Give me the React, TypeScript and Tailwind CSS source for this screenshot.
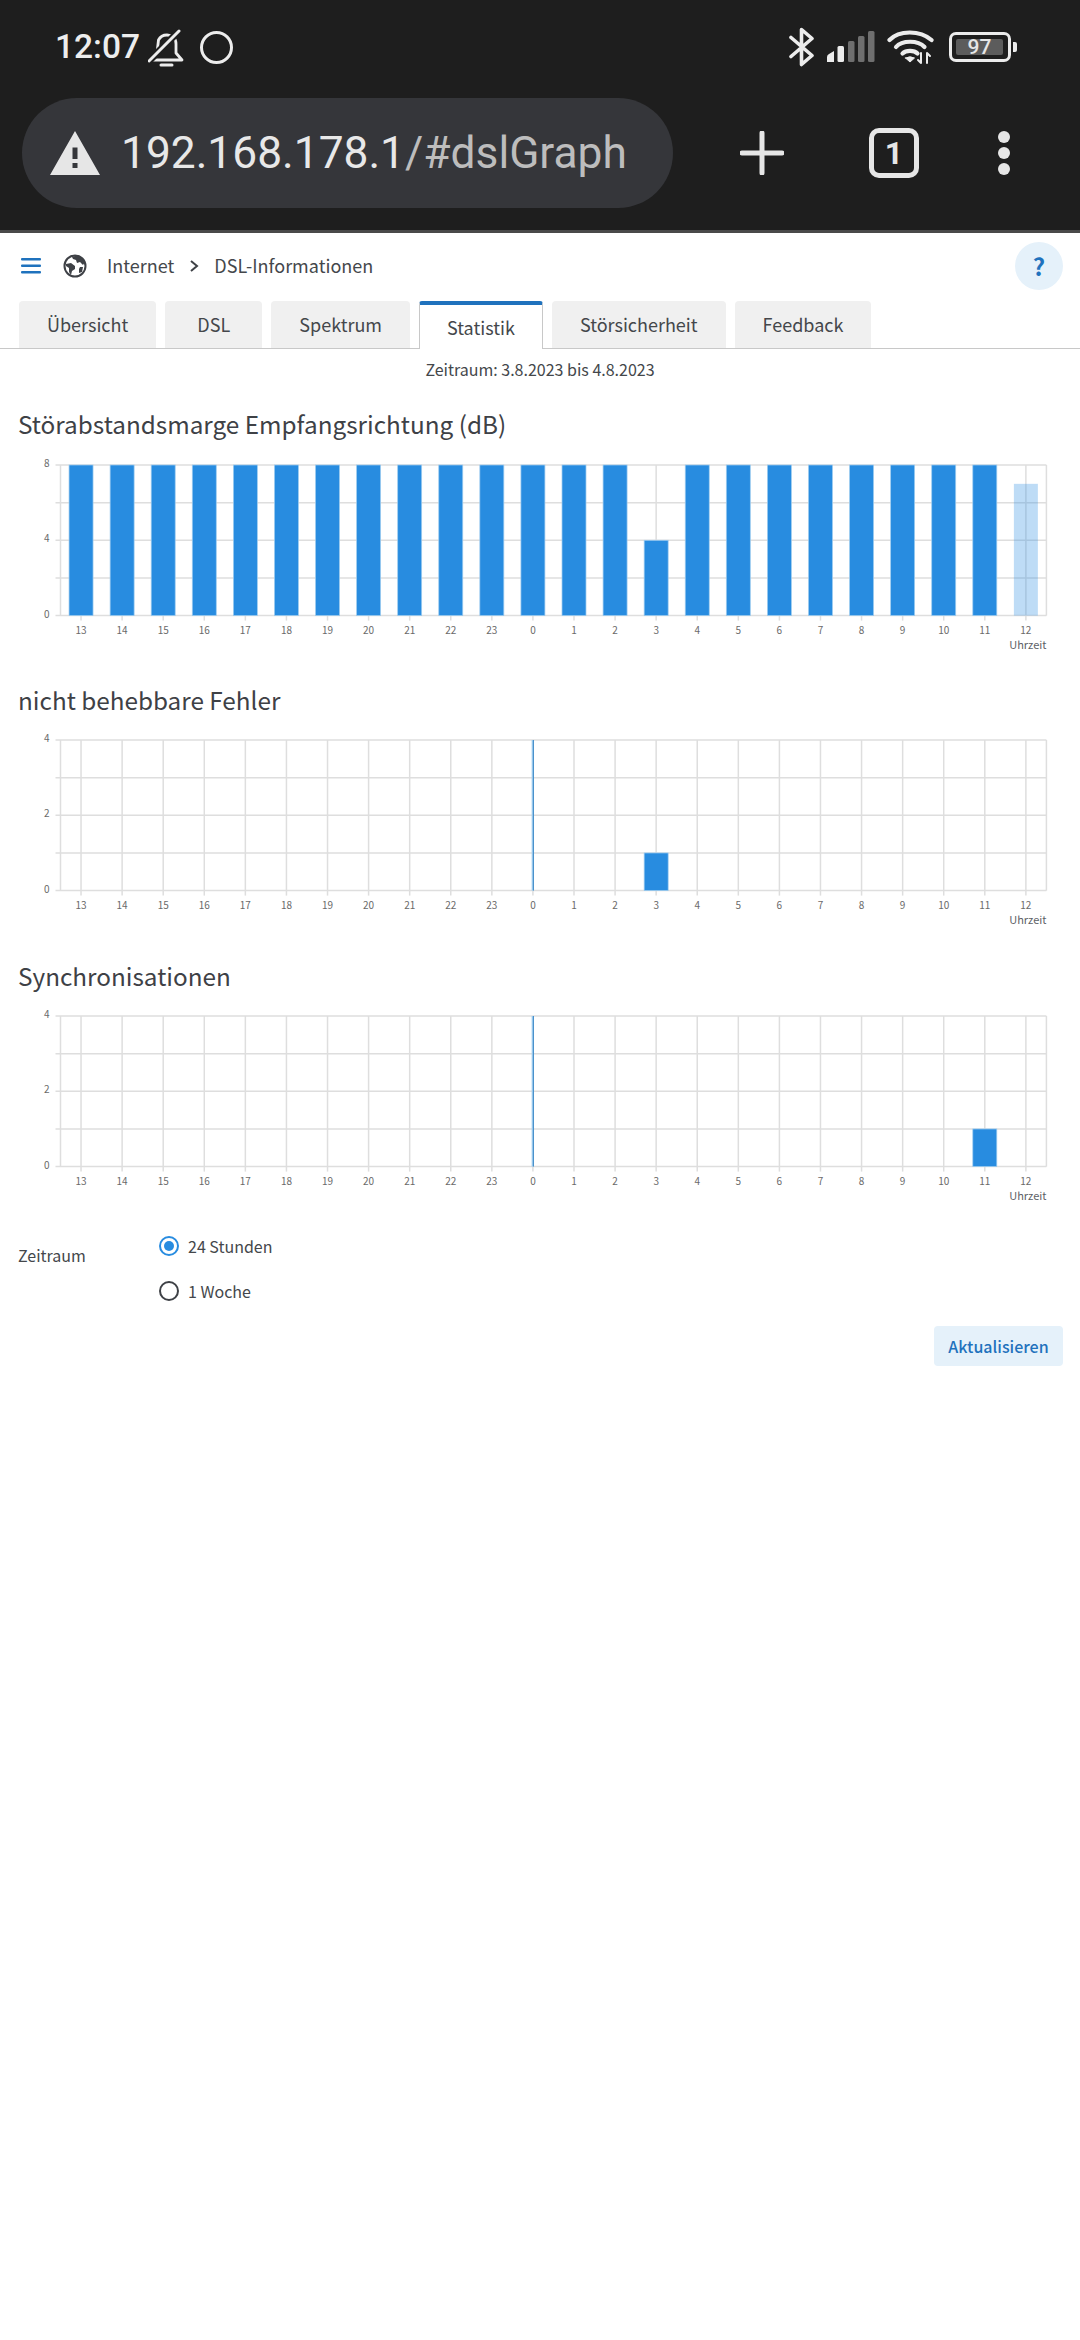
import React from "react";

const hours = [13, 14, 15, 16, 17, 18, 19, 20, 21, 22, 23, 0, 1, 2, 3, 4, 5, 6, 7, 8, 9, 10, 11, 12];
const tabs = ["Übersicht", "DSL", "Spektrum", "Statistik", "Störsicherheit", "Feedback"];

const LEFT = 60.5;
const STEP = 41.08;
const PLOT_H = 150.6;

type ChartProps = {
    max: number;
    values: number[];
    ghost?: number;
    midnightLine?: boolean;
};

const Chart = ({ max, values, ghost, midnightLine }: ChartProps) => {
    const top = 12;
    const bottom = top + PLOT_H;
    const right = LEFT + STEP * 24;
    const y = (v: number) => bottom - (v / max) * PLOT_H;
    const mid = LEFT + STEP * 11.5;
    return (
        <svg width={1080} height={201} className="block">
            {[0, 1, 2, 3, 4].map((i) => {
                const ly = top + (PLOT_H / 4) * i;
                return <line key={i} x1={LEFT - 5} x2={right} y1={ly} y2={ly} stroke="#dedede" strokeWidth={1.5} />;
            })}
            <line x1={LEFT} x2={LEFT} y1={top} y2={bottom} stroke="#dedede" strokeWidth={1.5} />
            <line x1={right} x2={right} y1={top} y2={bottom} stroke="#dedede" strokeWidth={1.5} />
            {hours.map((h, i) => {
                const cx = LEFT + STEP * (i + 0.5);
                return (
                    <g key={i}>
                        <line x1={cx} x2={cx} y1={top} y2={bottom + 5} stroke="#dedede" strokeWidth={1.5} />
                        <text x={cx} y={bottom + 18} textAnchor="middle" fontSize={10} fill="#6a6a6a">
                            {h}
                        </text>
                    </g>
                );
            })}
            {values.map((v, i) =>
                v > 0 ? (
                    <rect key={i} x={LEFT + STEP * (i + 0.5) - 12} y={y(v)} width={24} height={bottom - y(v)} fill="#288ce0" stroke="#9fcdf0" strokeWidth={0.75} />
                ) : null
            )}
            {ghost !== undefined && (
                <rect x={LEFT + STEP * 23.5 - 12} y={y(ghost)} width={24} height={bottom - y(ghost)} fill="#288ce0" fillOpacity={0.3} />
            )}
            {midnightLine && (
                <g>
                    <line x1={mid - 0.5} x2={mid - 0.5} y1={top} y2={bottom} stroke="#9fcdf0" strokeWidth={1.5} />
                    <line x1={mid + 0.5} x2={mid + 0.5} y1={top} y2={bottom} stroke="#3d8ac9" strokeWidth={1} />
                </g>
            )}
            {[max, max / 2, 0].map((v) => (
                <text key={v} x={LEFT - 11} y={y(v) + 2} textAnchor="end" fontSize={10} fill="#6a6a6a">
                    {v}
                </text>
            ))}
            <text x={right} y={bottom + 33} textAnchor="end" fontSize={11} fill="#5d6166">
                Uhrzeit
            </text>
        </svg>
    );
};

const StatusIcons = () => (
    <div className="flex items-center">
        {/* bluetooth */}
        <svg width="25" height="40" viewBox="0 0 25 40" fill="none" stroke="#ececec" strokeWidth="3.6" strokeLinejoin="round" strokeLinecap="round">
            <path d="M2 10.5 L23 28.5 L12.5 37.5 V2.5 L23 11.5 L2 29.5" />
        </svg>
        {/* signal */}
        <svg width="48" height="32" viewBox="0 0 48 32" className="ml-[13px]">
            <path d="M0 31 V26 Q0 24 2 23 L7 20 V31 Z" fill="#ececec" />
            <rect x="10.5" y="15" width="6.5" height="16" rx="1.5" fill="#ececec" />
            <rect x="21" y="10" width="6.5" height="21" rx="1.5" fill="#6f6f6f" />
            <rect x="31" y="5" width="6.5" height="26" rx="1.5" fill="#6f6f6f" />
            <rect x="41" y="0" width="6.5" height="31" rx="1.5" fill="#6f6f6f" />
        </svg>
        {/* wifi */}
        <svg width="47" height="36" viewBox="0 0 47 36" fill="none" stroke="#ececec" strokeWidth="4.2" strokeLinecap="round" className="ml-[12px]">
            <path d="M2.5 11 C12 1 33 1 44.5 11" />
            <path d="M9 18 C15 11 31 11 37.5 18" />
            <path d="M15.5 24.5 C19 21 27 21 30.5 24.5" />
            <path d="M18.5 29 L23 33 L27.5 29 Q23 26.5 18.5 29 Z" fill="#ececec" strokeWidth="1" />
            <path d="M34 24 V34 M34 34 L31 31 M40 34 V24 M40 24 L43 27" strokeWidth="2" />
        </svg>
        {/* battery */}
        <div className="ml-[15px] flex items-center">
            <div className="flex h-[30px] w-[62px] items-center rounded-[7px] border-[3px] border-[#ececec] p-[4px]">
                <div className="flex h-[16px] w-[47px] items-center justify-center rounded-[2px] bg-[#5c5c5c] font-['Roboto',sans-serif] text-[21px] leading-none font-medium text-[#e6e6e6]">
                    97
                </div>
            </div>
            <div className="ml-[2px] h-[10px] w-[4px] rounded-r-[2px] bg-[#ececec]" />
        </div>
    </div>
);

const Header = () => (
    <div className="h-[233px] border-b-[3px] border-[#4a4a4a] bg-[#1e1e1e] font-['Roboto',sans-serif]">
        <div className="flex h-[98px] items-start justify-between pt-[27px] pr-[63px] pl-[55px]">
            <div className="flex h-[40px] items-center">
                <span className="text-[33.5px] leading-none font-medium text-[#ededed]">12:07</span>
                <svg width="36" height="38" viewBox="0 0 36 38" fill="none" stroke="#ececec" strokeWidth="2.8" strokeLinecap="round" strokeLinejoin="round" className="mt-[2px] ml-[8px]">
                    <path d="M4 31 H34 L28 24 V15 C28 9 24 6 19 6 C15 6 12 8 10.5 11 L9 24 Z" />
                    <path d="M13 36 H24" strokeWidth="3" />
                    <path d="M1 32 L31 2" stroke="#1e1e1e" strokeWidth="7" />
                    <path d="M1 32 L31 2" strokeWidth="3" />
                </svg>
                <div className="ml-[16px] h-[33px] w-[33px] rounded-full border-[3px] border-[#ececec]" />
            </div>
            <StatusIcons />
        </div>
        <div className="flex items-center">
            <div className="ml-[22px] flex h-[110px] w-[651px] items-center rounded-full bg-[#35363a] pl-[28px]">
                <svg width="50" height="44" viewBox="0 0 50 44">
                    <path fillRule="evenodd" d="M25 0 L50 44 H0 Z M22.5 16.5 H27.5 V28 H22.5 Z M22.5 32 H27.5 V37 H22.5 Z" fill="#e6e6e6" />
                </svg>
                <span className="ml-[21px] text-[44.3px] leading-none">
                    <span className="text-[#e8e8e8]">192.168.178.1</span>
                    <span className="text-[#bdbdbd]">/#dslGraph</span>
                </span>
            </div>
            <svg width="44" height="44" viewBox="0 0 44 44" stroke="#e6e6e6" strokeWidth="5" strokeLinecap="round" className="ml-[67px]">
                <path d="M22 2 V42 M2 22 H42" />
            </svg>
            <div className="ml-[85px] flex h-[50px] w-[50px] items-center justify-center rounded-[10px] border-[5px] border-[#e6e6e6] text-[32px] font-bold text-[#e6e6e6]">
                1
            </div>
            <div className="ml-[79px] flex flex-col gap-[4px]">
                <div className="h-[12px] w-[12px] rounded-full bg-[#e6e6e6]" />
                <div className="h-[12px] w-[12px] rounded-full bg-[#e6e6e6]" />
                <div className="h-[12px] w-[12px] rounded-full bg-[#e6e6e6]" />
            </div>
        </div>
    </div>
);

const Globe = () => (
    <svg width="24" height="24" viewBox="0 0 24 24">
        <circle cx="12" cy="12" r="10.5" fill="none" stroke="#3e4146" strokeWidth="2" />
        <path d="M12 2 C16 2 20 4 22 8 L20 11 L17 8 L14 9 L13 6 L10 5 L9 3 Z M3 10 L8 9 L12 12 L12 15 L9 17 L8 21 L6 18 L6 14 L3 12 Z M17 13 L20 13 L19 18 L16 19 L16 15 Z" fill="#3e4146" />
    </svg>
);

const Tab = ({ label, active }: { label: string; active: boolean }) => (
    <div
        className={
            active
                ? "relative z-10 -mb-px flex h-[48px] items-center rounded-t-[3px] border-x border-t-[4px] border-x-[#c8c8c8] border-t-[#1f72bd] bg-white px-[27px] text-[18px] text-[#44474b]"
                : "flex h-[47px] min-w-[97px] items-center justify-center rounded-t-[4px] bg-[#f0f0f0] px-[28px] text-[18px] text-[#44474b]"
        }
    >
        {label}
    </div>
);

const SectionTitle = ({ children, className }: { children: React.ReactNode; className: string }) => (
    <h2 className={`pl-[18px] text-[24.3px] leading-[34px] text-[#3e4146] ${className}`}>{children}</h2>
);

const margin = hours.map((h) => (h === 3 ? 4 : h === 12 ? 0 : 8));
const errors = hours.map((h) => (h === 3 ? 1 : 0));
const syncs = hours.map((h) => (h === 11 ? 1 : 0));

export default function App() {
    return (
        <div className="min-h-[2340px] bg-white font-['Noto_Sans_CJK_SC','Noto_Sans',sans-serif]">
            <Header />
            {/* breadcrumb */}
            <div className="flex h-[65px] items-center pr-[17px] pl-[21px] text-[18px] text-[#44474b]">
                <svg width="20" height="16" viewBox="0 0 20 16" fill="#1f72bd">
                    <rect width="20" height="2.5" rx="1" />
                    <rect y="6.5" width="20" height="2.5" rx="1" />
                    <rect y="13" width="20" height="2.5" rx="1" />
                </svg>
                <div className="ml-[22px]">
                    <Globe />
                </div>
                <span className="ml-[20px]">Internet</span>
                <svg width="12" height="14" viewBox="0 0 12 14" fill="none" stroke="#3e4146" strokeWidth="2" className="mx-[14px]">
                    <path d="M3 2 L9 7 L3 12" />
                </svg>
                <span>DSL-Informationen</span>
                <div className="ml-auto flex h-[48px] w-[48px] items-center justify-center rounded-full bg-[#e5f1fa] text-[24px] font-bold text-[#1f72bd]">
                    ?
                </div>
            </div>
            {/* tabs */}
            <div className="flex h-[51px] items-end gap-[9px] border-b border-[#c8c8c8] pl-[19px]">
                {tabs.map((t) => (
                    <Tab key={t} label={t} active={t === "Statistik"} />
                ))}
            </div>
            <p className="mt-[7px] text-center text-[16px] leading-[26px] text-[#44474b]">Zeitraum: 3.8.2023 bis 4.8.2023</p>

            <SectionTitle className="mt-[25px]">Störabstandsmarge Empfangsrichtung (dB)</SectionTitle>
            <div className="mt-[12px]">
                <Chart max={8} values={margin} ghost={7} />
            </div>
            <SectionTitle className="mt-[29px]">nicht behebbare Fehler</SectionTitle>
            <div className="mt-[11px]">
                <Chart max={4} values={errors} midnightLine />
            </div>
            <SectionTitle className="mt-[30px]">Synchronisationen</SectionTitle>
            <div className="mt-[11px]">
                <Chart max={4} values={syncs} midnightLine />
            </div>

            {/* radio group */}
            <div className="mt-[18px] flex text-[16px] leading-[26px] text-[#44474b]">
                <span className="mt-[19px] w-[159px] pl-[18px]">Zeitraum</span>
                <div className="flex flex-col gap-[19px] pt-[10px]">
                    <label className="flex items-center gap-[9px]">
                        <span className="flex h-[20px] w-[20px] items-center justify-center rounded-full border-2 border-[#288ce0]">
                            <span className="h-[10px] w-[10px] rounded-full bg-[#288ce0]" />
                        </span>
                        24 Stunden
                    </label>
                    <label className="flex items-center gap-[9px]">
                        <span className="h-[20px] w-[20px] rounded-full border-2 border-[#3e4146]" />1 Woche
                    </label>
                </div>
            </div>
            <div className="mt-[22px] flex justify-end pr-[17px]">
                <button className="flex h-[40px] w-[129px] items-center justify-center rounded-[4px] bg-[#e5f1fa] text-[16px] font-medium text-[#1f72bd]">
                    Aktualisieren
                </button>
            </div>
        </div>
    );
}
